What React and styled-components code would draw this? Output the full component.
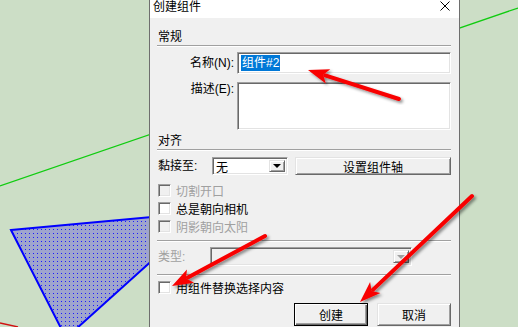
import React from "react";
import styled, { createGlobalStyle, css } from "styled-components";

const GlobalStyle = createGlobalStyle`
  html, body {
    margin: 0;
    padding: 0;
  }
  body {
    width: 518px;
    height: 327px;
    overflow: hidden;
    font-family: "Liberation Sans", "Noto Sans CJK SC", sans-serif;
  }
`;

const sunken = css`
  box-sizing: border-box;
  border: 1px solid;
  border-color: #a0a0a0 #ffffff #ffffff #a0a0a0;
  box-shadow: inset 1px 1px 0 #696969, inset -1px -1px 0 #e3e3e3;
`;

const raised = css`
  box-sizing: border-box;
  border: 1px solid;
  border-color: #e3e3e3 #696969 #696969 #e3e3e3;
  box-shadow: inset 1px 1px 0 #ffffff, inset -1px -1px 0 #a0a0a0;
  background: #f0f0f0;
`;

const Desktop = styled.div`
  position: relative;
  width: 518px;
  height: 327px;
  overflow: hidden;
  background: #ccdec6;
`;

const Scene = styled.svg`
  position: absolute;
  left: 0;
  top: 0;
`;

const Overlay = styled.svg`
  position: absolute;
  left: 0;
  top: 0;
  z-index: 2;
  pointer-events: none;
`;

const Window = styled.div`
  position: absolute;
  left: 149px;
  top: -7px;
  width: 311px;
  height: 345px;
  box-sizing: border-box;
  border: 1px solid #6e6e6e;
  background: #f0f0f0;
  display: flex;
  flex-direction: column;
  font-size: 12px;
  color: #000;
`;

const TitleBar = styled.div`
  flex: none;
  height: 24px;
  background: #fff;
  display: flex;
  align-items: center;
  justify-content: space-between;
  padding: 0 9px 0 3px;
`;

const Title = styled.span`
  font-family: "Noto Sans CJK SC", sans-serif;
  font-size: 12px;
  line-height: 14px;
`;

const Body = styled.div`
  display: flex;
  flex-direction: column;
  padding: 11px 8px 0 8px;
`;

const Heading = styled.div`
  height: 16px;
  line-height: 16px;
  margin-top: ${(p) => p.$gap || 0}px;
`;

const Separator = styled.div`
  height: 0;
  margin: ${(p) => p.$gap || 0}px 0 0 -1px;
  border-top: 1px solid #a0a0a0;
  border-bottom: 1px solid #ffffff;
`;

const Row = styled.div`
  display: flex;
  align-items: ${(p) => p.$align || "center"};
  height: ${(p) => p.$h}px;
  margin-top: ${(p) => p.$gap || 0}px;
`;

const Label = styled.label`
  flex: none;
  width: ${(p) => p.$w}px;
  margin-right: ${(p) => p.$mr || 0}px;
  text-align: ${(p) => p.$align || "left"};
  line-height: 14px;
  color: ${(p) => (p.$disabled ? "#a0a0a0" : "#000")};
`;

const TextBox = styled.div`
  ${sunken};
  width: 214px;
  height: ${(p) => p.$h}px;
  background: #fff;
  display: flex;
  align-items: center;
  padding-left: 3px;
`;

const Selected = styled.span`
  background: #0078d7;
  color: #fff;
  line-height: 16px;
  padding: 0 1px;
`;

const Select = styled.div`
  ${sunken};
  width: ${(p) => p.$w}px;
  height: ${(p) => p.$h}px;
  background: ${(p) => (p.$disabled ? "#f0f0f0" : "#fff")};
  display: flex;
  align-items: center;
  justify-content: space-between;
  padding: 2px 2px 2px 3px;
`;

const DropButton = styled.span`
  ${raised};
  width: 16px;
  height: 100%;
  display: flex;
  align-items: center;
  justify-content: center;
`;

const Caret = styled.span`
  width: 0;
  height: 0;
  border-left: 4px solid transparent;
  border-right: 4px solid transparent;
  border-top: 4px solid ${(p) => (p.$disabled ? "#a0a0a0" : "#000")};
`;

const Button = styled.button`
  ${raised};
  font: inherit;
  color: #000;
  height: ${(p) => p.$h}px;
  width: ${(p) => (p.$w ? `${p.$w}px` : "auto")};
  flex: ${(p) => (p.$w ? "none" : 1)};
  margin-left: ${(p) => p.$ml || 0}px;
  padding: 0;
  ${(p) =>
    p.$primary &&
    css`
      border: 1px solid #000;
      box-shadow: inset 1px 1px 0 #ffffff, inset -1px -1px 0 #696969,
        inset -2px -2px 0 #a0a0a0;
    `}
`;

const CheckRow = styled.div`
  display: flex;
  align-items: center;
  height: 18px;
  margin-top: ${(p) => p.$gap || 0}px;
  color: ${(p) => (p.$disabled ? "#a0a0a0" : "#000")};
`;

const Box = styled.span`
  ${sunken};
  width: 13px;
  height: 13px;
  margin-right: 5px;
  background: ${(p) => (p.$disabled ? "#f0f0f0" : "#fff")};
`;

const Footer = styled.div`
  display: flex;
  justify-content: flex-end;
  gap: 9px;
  margin-top: 7px;
`;

const Arrow = ({ from, to }) => {
  const dx = to[0] - from[0];
  const dy = to[1] - from[1];
  const len = Math.hypot(dx, dy);
  const ux = dx / len;
  const uy = dy / len;
  const bx = to[0] - ux * 21;
  const by = to[1] - uy * 21;
  const px = -uy * 7.5;
  const py = ux * 7.5;
  return (
    <g filter="url(#shadow)">
      <line
        x1={from[0]}
        y1={from[1]}
        x2={bx + ux * 3}
        y2={by + uy * 3}
        stroke="#f80000"
        strokeWidth="4"
        strokeLinecap="round"
      />
      <polygon
        points={`${to[0]},${to[1]} ${bx + px},${by + py} ${bx + ux * 5},${by + uy * 5} ${bx - px},${by - py}`}
        fill="#f80000"
      />
    </g>
  );
};

const CloseIcon = () => (
  <svg width="10" height="10" viewBox="0 0 10 10">
    <path d="M0.5 0.5 L9.5 9.5 M9.5 0.5 L0.5 9.5" stroke="#000" strokeWidth="1" />
  </svg>
);

const App = () => (
  <Desktop>
    <GlobalStyle />
    <Scene width="518" height="327">
      <defs>
        <pattern id="dots" width="4" height="4" patternUnits="userSpaceOnUse">
          <rect width="4" height="4" fill="#9fa5cd" />
          <rect x="1" y="1" width="1" height="1" fill="#1a1aff" />
        </pattern>
      </defs>
      <line x1="0" y1="186" x2="518" y2="8" stroke="#10cc10" strokeWidth="1.2" />
      <polygon
        points="11,230 206,212 66,338"
        fill="url(#dots)"
        stroke="#0000ff"
        strokeWidth="2"
      />
      <line x1="0" y1="323" x2="18" y2="327" stroke="#d01010" strokeWidth="1.3" />
    </Scene>

    <Window>
      <TitleBar>
        <Title>创建组件</Title>
        <CloseIcon />
      </TitleBar>
      <Body>
        <Heading>常规</Heading>
        <Separator />
        <Row $h={22} $gap={5}>
          <Label $w={76} $mr={3} $align="right">名称(N):</Label>
          <TextBox $h={22}>
            <Selected>组件#2</Selected>
          </TextBox>
        </Row>
        <Row $h={48} $gap={8} $align="flex-start">
          <Label $w={76} $mr={3} $align="right">描述(E):</Label>
          <TextBox $h={48} />
        </Row>

        <Heading $gap={3}>对齐</Heading>
        <Separator />
        <Row $h={18} $gap={6}>
          <Label $w={54}>黏接至:</Label>
          <Select $w={76} $h={18}>
            无
            <DropButton>
              <Caret />
            </DropButton>
          </Select>
          <Button $h={18} $ml={7}>设置组件轴</Button>
        </Row>
        <CheckRow $gap={6} $disabled>
          <Box $disabled />
          切割开口
        </CheckRow>
        <CheckRow>
          <Box />
          总是朝向相机
        </CheckRow>
        <CheckRow $disabled>
          <Box $disabled />
          阴影朝向太阳
        </CheckRow>
        <Separator $gap={5} />
        <Row $h={19} $gap={5}>
          <Label $w={52} $disabled>类型:</Label>
          <Select $w={202} $h={19} $disabled>
            <span />
            <DropButton>
              <Caret $disabled />
            </DropButton>
          </Select>
        </Row>
        <Separator $gap={8} />
        <CheckRow $gap={2}>
          <Box />
          用组件替换选择内容
        </CheckRow>
        <Footer>
          <Button $w={74} $h={23} $primary>创建</Button>
          <Button $w={74} $h={23}>取消</Button>
        </Footer>
      </Body>
    </Window>

    <Overlay width="518" height="327">
      <defs>
        <filter id="shadow" x="-20%" y="-20%" width="140%" height="140%">
          <feDropShadow dx="2" dy="2" stdDeviation="1.5" floodColor="#000" floodOpacity="0.45" />
        </filter>
      </defs>
      <Arrow from={[399, 99]} to={[308, 70]} />
      <Arrow from={[472, 196]} to={[360, 302]} />
      <Arrow from={[265, 236]} to={[172, 286]} />
    </Overlay>
  </Desktop>
);

export default App;
